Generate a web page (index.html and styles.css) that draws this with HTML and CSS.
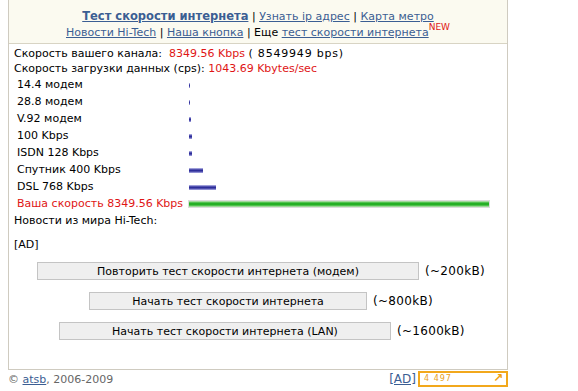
FILE: index.html
```html
<!DOCTYPE html>
<html lang="ru">
<head>
  <meta charset="UTF-8" />
  <title>Тест скорости интернета</title>
  <link rel="stylesheet" href="styles.css">
</head>
<body>

  <div class="box">
    <div class="top">
      <div><a href="#" class="cur">Тест скорости интернета</a> | <a href="#">Узнать ip адрес</a> | <a href="#">Карта метро</a></div>
      <div><a href="#">Новости Hi-Tech</a> | <a href="#">Наша кнопка</a> | Еще <a href="#">тест скорости интернета</a><sup class="new">NEW</sup></div>
    </div>

    <div class="content">
      <div>Скорость вашего канала: &nbsp;<span class="red">8349.56 Kbps</span> <span class="bps">( 8549949 bps)</span></div>
      <div>Скорость загрузки данных (cps): <span class="red">1043.69 Kbytes/sec</span></div>

      <div class="speeds">
        <div class="row"><span class="lbl">14.4 модем</span><span class="bar" style="width:1px"></span></div>
        <div class="row"><span class="lbl">28.8 модем</span><span class="bar" style="width:1px"></span></div>
        <div class="row"><span class="lbl">V.92 модем</span><span class="bar" style="width:2px"></span></div>
        <div class="row"><span class="lbl">100 Kbps</span><span class="bar" style="width:3px"></span></div>
        <div class="row"><span class="lbl">ISDN 128 Kbps</span><span class="bar" style="width:3px"></span></div>
        <div class="row"><span class="lbl">Спутник 400 Kbps</span><span class="bar" style="width:14px"></span></div>
        <div class="row"><span class="lbl">DSL 768 Kbps</span><span class="bar" style="width:27px"></span></div>
        <div class="row"><span class="lbl red">Ваша скорость 8349.56 Kbps</span><span class="bar green" style="width:300px"></span></div>
      </div>

      <div class="news">Новости из мира Hi-Tech:</div>
      <div class="ad">[AD]</div>

      <div class="tests">
        <div class="test"><button class="btn w1">Повторить тест скорости интернета (модем)</button><span class="size">(~200kB)</span></div>
        <div class="test"><button class="btn w2">Начать тест скорости интернета</button><span class="size">(~800kB)</span></div>
        <div class="test"><button class="btn w3">Начать тест скорости интернета (LAN)</button><span class="size">(~1600kB)</span></div>
      </div>
    </div>
  </div>

  <footer>
    <span>&copy; <a href="#">atsb</a>, 2006-2009</span>
    <span class="right"><a href="#">[AD]</a><span class="counter">4 497<span class="arrow">&#8599;</span></span></span>
  </footer>

</body>
</html>
```

FILE: styles.css
```css
body {
  font-family: "DejaVu Sans", Verdana, sans-serif;
  font-size: 11px;
  margin: 0 8px;
  background: #fff;
  color: #000;
}
a {
  color: #3b5e93;
}
.box {
  width: 498px;
  border: 1px solid #cfcbc0;
  border-top: none;
}
.top {
  background: #fbfaf0;
  border-bottom: 1px solid #d8d4c4;
  text-align: center;
  padding: 8px 0 2px;
  line-height: 16px;
}
.top .cur {
  font-weight: bold;
  font-size: 11.5px;
}
.new {
  color: #e01515;
  font-size: 9px;
  vertical-align: 6px;
  line-height: 0;
}
.content {
  padding: 2px 5px 23px;
  line-height: 15px;
}
.red {
  color: #e01515;
}
.bps {
  letter-spacing: 0.8px;
}
.row {
  display: flex;
  align-items: center;
  height: 17px;
}
.lbl {
  width: 172px;
  padding-left: 3px;
}
.bar {
  height: 5px;
  background: linear-gradient(#c4c4ee, #2d2d9a 40%, #2d2d9a 60%, #b0b0e6);
  margin-top: 1px;
}
.green {
  height: 6px;
  background: linear-gradient(#c8e8c0, #25b025 35%, #25b025 65%, #bde6b5);
  outline: 1px solid #dcdcdc;
}
.news {
  margin-top: 1px;
}
.ad {
  margin-top: 9px;
}
.tests {
  margin-top: 4px;
}
.test {
  display: flex;
  align-items: center;
  gap: 6px;
  height: 30px;
}
.btn {
  font-family: inherit;
  font-size: 11px;
  height: 18px;
  padding: 0;
  background: #efefef;
  border: 1px solid #c4c4c4;
  color: #000;
}
.size {
  font-size: 12px;
  letter-spacing: 0.3px;
}
.w1 { width: 382px; margin-left: 23px; }
.w2 { width: 278px; margin-left: 75px; }
.w3 { width: 332px; margin-left: 45px; }
footer {
  width: 500px;
  display: flex;
  justify-content: space-between;
  align-items: center;
  color: #666;
  margin-top: 1px;
}
.right {
  display: flex;
  align-items: center;
  gap: 2px;
}
.right a {
  font-size: 12px;
}
.counter {
  width: 82px;
  height: 12px;
  border: 2px solid #f2a81c;
  color: #e8a020;
  font-size: 8px;
  line-height: 12px;
  padding-left: 4px;
  position: relative;
  letter-spacing: 1px;
}
.arrow {
  position: absolute;
  right: 2px;
  top: -1px;
  font-size: 12px;
  font-weight: bold;
  color: #f0a010;
}
```
